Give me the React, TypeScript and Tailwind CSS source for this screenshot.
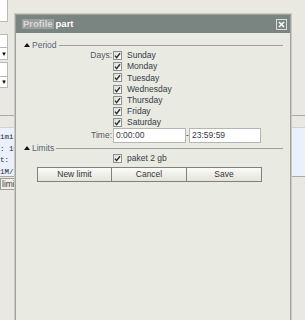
import React from "react";

const days = ["Sunday", "Monday", "Tuesday", "Wednesday", "Thursday", "Friday", "Saturday"];

const Check = () => (
  <span className="w-[9px] h-[9px] border border-[#8d918c] bg-gradient-to-br from-[#dcdcd6] to-[#ffffff] flex items-center justify-center shrink-0">
    <svg width="7" height="7" viewBox="0 0 7 7">
      <path d="M1 3.6 L2.6 5.6 L6 1.2" stroke="#2b2f33" strokeWidth="1.4" fill="none" />
    </svg>
  </span>
);

const Legend = ({ title }: { title: string }) => (
  <div className="h-[10px] flex items-center pl-[8px] pr-[7px]">
    <svg width="6" height="4" viewBox="0 0 6 4" className="shrink-0">
      <path d="M0 4 L3 0 L6 4 Z" fill="#111" />
    </svg>
    <span className="ml-[2px] text-[#56657a]">{title}</span>
    <div className="flex-1 ml-[2px] border-t border-[#9fa19c]" />
  </div>
);

const Row = ({ label, children, h = "h-[11.2px]" }: { label?: string; children: React.ReactNode; h?: string }) => (
  <div className={`flex items-center ${h}`}>
    <div className="w-[97px] text-right text-[#555a60] pr-[1px]">{label}</div>
    {children}
  </div>
);

const App = () => {
  return (
    <div
      className="relative w-[305px] h-[320px] overflow-hidden bg-[#e9e9e1] text-[8.5px] text-[#363c46]"
      style={{ fontFamily: '"Liberation Sans", Arial, sans-serif' }}
    >
      {/* page behind the dialog */}
      <div className="flex flex-col w-full">
        <div className="h-[115px] flex flex-col w-[8px]">
          <div className="h-[22px] bg-white border-r border-b border-[#b8b9b2]" />
          <div className="h-[12px]" />
          <div className="h-[14px] bg-white border-r border-y border-[#b8b9b2]" />
          <div className="h-[12px] bg-white border-r border-b border-[#b8b9b2] flex items-center pl-[1px]">
            <span className="text-[6px] leading-none text-black">▼</span>
          </div>
          <div className="h-[2px]" />
          <div className="h-[15px] bg-white border-r border-y border-[#b8b9b2]" />
          <div className="h-[11px] bg-white border-r border-b border-[#b8b9b2] flex items-center pl-[1px]">
            <span className="text-[6px] leading-none text-black">▼</span>
          </div>
        </div>
        <div className="h-[1px] bg-[#a9aba4]" />
        <div className="h-[11px]" />
        <div
          className="h-[49px] bg-[#eaf1fa] border-t border-[#d0d3d0] pt-[4px] text-[7.5px] leading-[11.5px] text-[#1d2a3a] whitespace-pre"
          style={{ fontFamily: '"Liberation Mono", monospace' }}
        >
          <div>imit:</div>
          <div>: 10</div>
          <div>t: 1</div>
          <div>1M/</div>
        </div>
        <div className="h-[1px] bg-[#a9aba4]" />
        <div className="h-[12px] mt-[1px] w-[20px] border border-[#9a9c97] bg-[#efefe9] flex items-center text-[#3a3a3a] pl-[1px]">limit</div>
      </div>

      {/* dialog */}
      <div className="absolute left-[14px] top-[13px] w-[278px] h-[320px] bg-[#c9cac3] p-[1px]">
        <div className="w-full h-full border border-[#a1a39c] bg-[#e9eae2] flex flex-col">
          <div className="h-[18px] bg-[#7a8480] flex items-center pl-[6px] pr-[3px]">
            <span className="bg-[#9ba09d] text-[#d5d8d6] font-bold text-[9.5px] px-[1px] leading-[10px]">Profile</span>
            <span className="ml-[2px] text-white font-bold text-[9.5px]">part</span>
            <div className="flex-1" />
            <div className="w-[11px] h-[11px] border border-[#d9dcda] flex items-center justify-center">
              <svg width="7" height="7" viewBox="0 0 7 7">
                <path d="M1 1 L6 6 M6 1 L1 6" stroke="#ffffff" strokeWidth="1.6" />
              </svg>
            </div>
          </div>

          <div className="flex flex-col pt-[7px]">
            <Legend title="Period" />
            {days.map((d, i) => (
              <Row key={d} label={i === 0 ? "Days:" : undefined}>
                <Check />
                <span className="ml-[5px]">{d}</span>
              </Row>
            ))}
            <Row label="Time:" h="h-[15px]">
              <div className="w-[73px] h-[15px] bg-white border border-[#b4b6b1] flex items-center pl-[2px]">0:00:00</div>
              <span className="w-[3px] text-center">-</span>
              <div className="w-[72px] h-[15px] bg-white border border-[#b4b6b1] flex items-center pl-[2px]">23:59:59</div>
            </Row>
            <Legend title="Limits" />
            <Row h="h-[11px]">
              <Check />
              <span className="ml-[5px]">paket 2 gb</span>
            </Row>
            <div className="flex pl-[21px] mt-[3px]">
              {["New limit", "Cancel", "Save"].map((b, i) => (
                <div
                  key={b}
                  className={`w-[75px] h-[15px] border border-[#7e827d] bg-gradient-to-b from-[#fbfbf8] to-[#e4e4dc] flex items-center justify-center text-[#333] ${i > 0 ? "border-l-0" : ""}`}
                >
                  {b}
                </div>
              ))}
            </div>
          </div>
        </div>
      </div>
    </div>
  );
};

export default App;
